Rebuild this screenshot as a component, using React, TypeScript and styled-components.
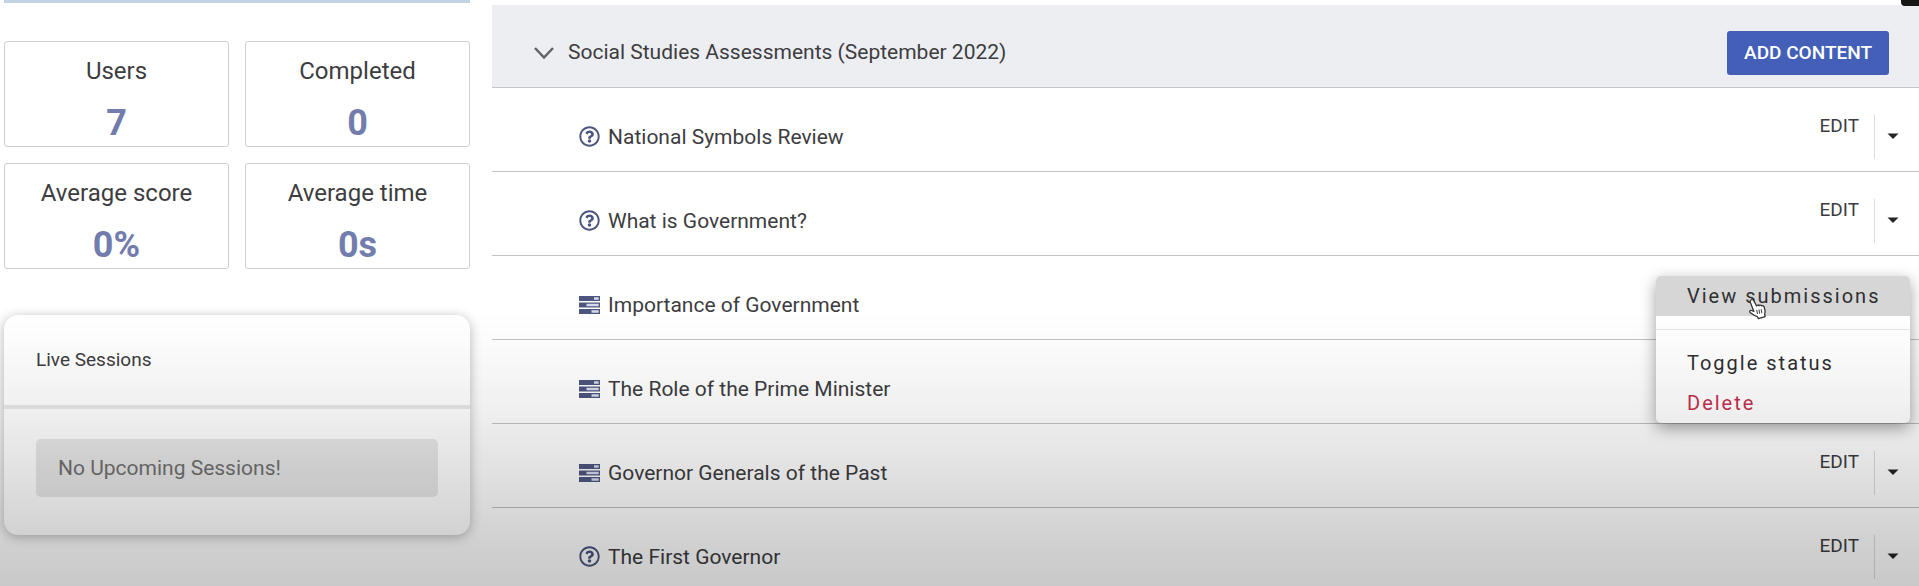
import React from "react";
import styled, { createGlobalStyle, css } from "styled-components";
import { FaRegQuestionCircle } from "react-icons/fa";

const GlobalStyle = createGlobalStyle`
  *, *::before, *::after { box-sizing: border-box; }
  body {
    margin: 0;
    background: #fff;
    color: #3d3d3f;
    font-family: Roboto, "Liberation Sans", sans-serif;
  }
  html { overflow: hidden; }
  button { font: inherit; color: inherit; background: none; border: 0; padding: 0; cursor: pointer; }
  h1, h2, p, ul, dl, dd { margin: 0; padding: 0; }
  ul { list-style: none; }
`;

const Page = styled.div`
  position: relative;
  display: flex;
  gap: 22px;
  padding-left: 4px;
`;

const Sidebar = styled.aside`
  flex: none;
  width: 466px;
`;

const Banner = styled.div`
  height: 3px;
  margin-bottom: 38px;
  background: #c2d4e3;
`;

const Stats = styled.dl`
  display: grid;
  grid-template-columns: 1fr 1fr;
  gap: 16px;
`;

const Stat = styled.div`
  height: 106px;
  padding-top: 13px;
  border: 1px solid #cfcfd1;
  border-radius: 3px;
  text-align: center;
`;

const StatLabel = styled.dt`
  font-size: 24px;
  line-height: 32px;
`;

const StatValue = styled.dd`
  margin-top: 14px;
  font-size: 36px;
  font-weight: 700;
  line-height: 44px;
  color: #727dad;
`;

const Card = styled.section`
  margin-top: 46px;
  border-radius: 14px;
  background: #fff;
  box-shadow: 0 2px 12px rgba(0, 0, 0, 0.28);
`;

const CardHeader = styled.header`
  padding: 30px 32px;
  border-bottom: 4px solid #e8e8e8;
`;

const CardTitle = styled.h2`
  font-size: 19px;
  font-weight: 400;
  line-height: 30px;
`;

const CardBody = styled.div`
  padding: 30px 32px 38px;
`;

const Notice = styled.p`
  padding: 14px 22px;
  border-radius: 5px;
  background: #e8e8e8;
  color: #717171;
  font-size: 21px;
  line-height: 30px;
`;

const Content = styled.main`
  flex: 1;
  min-width: 0;
  padding-top: 5px;
`;

const SectionHeader = styled.header`
  display: flex;
  align-items: center;
  height: 83px;
  padding: 14px 30px 0 42px;
  border-bottom: 1px solid #c4c5c8;
  background: #edeef2;
`;

const Toggle = styled.button`
  display: flex;
  margin-right: 14px;
`;

const SectionTitle = styled.h1`
  flex: 1;
  padding-bottom: 2px;
  font-size: 21px;
  font-weight: 400;
  line-height: 30px;
`;

const AddButton = styled.button`
  height: 44px;
  padding: 0 17px;
  && { background: #435fb8; color: #fff; font-size: 19px; font-weight: 500; line-height: 44px; }
  border-radius: 3px;
`;

const Row = styled.li`
  position: relative;
  display: flex;
  align-items: center;
  height: 84px;
  padding: 14px 16px 0 87px;
  border-bottom: 1px solid #c3c3c3;
  font-size: 21px;
  line-height: 30px;
`;

const RowIcon = styled.span`
  display: flex;
  width: 21px;
  margin-right: 8px;
  color: #4d567f;
`;

const RowTitle = styled.span`
  flex: 1;
`;

const Actions = styled.div`
  display: flex;
  height: 44px;
`;

const EditButton = styled.button`
  height: 22px;
  margin-right: 15px;
  && { font-size: 19px; line-height: 22px; }
`;

const CaretButton = styled.button`
  display: flex;
  align-items: center;
  && { padding: 0 4px 0 12px; border-left: 1px solid #dcdcdc; }
`;

const Menu = styled.div`
  position: absolute;
  z-index: 1;
  top: 20px;
  right: 9px;
  width: 254px;
  height: 147px;
  border-radius: 5px;
  background: #fff;
  box-shadow: 0 5px 16px rgba(0, 0, 0, 0.38);
`;

const MenuItem = styled.button<{ $active?: boolean; $danger?: boolean }>`
  display: block;
  width: 100%;
  height: 40px;
  && {
    padding-left: 31px;
    font-size: 20px;
    letter-spacing: 2px;
    line-height: 40px;
    text-align: left;
    color: ${(p) => (p.$danger ? "#c5304f" : "#2f2f31")};
    ${(p) => p.$active && css`background: #d6d6d6; border-radius: 5px 5px 0 0;`}
  }
`;

const MenuRule = styled.hr`
  margin: 13px 0;
  border: 0;
  border-top: 1px solid #e6e6e6;
`;

const Pointer = styled.svg`
  position: absolute;
  z-index: 2;
  top: 22px;
  left: 92px;
`;

const Shade = styled.div`
  position: fixed;
  z-index: 3;
  inset: auto 0 0;
  height: 47vh;
  pointer-events: none;
  background: linear-gradient(
    rgba(0, 0, 0, 0), rgba(0, 0, 0, 0.015) 12%, rgba(0, 0, 0, 0.06) 35%,
    rgba(0, 0, 0, 0.12) 60%, rgba(0, 0, 0, 0.18) 83%, rgba(0, 0, 0, 0.21)
  );
`;

const Corner = styled.div`
  position: absolute;
  z-index: 4;
  top: 0;
  right: 0;
  width: 18px;
  height: 6px;
  border-bottom-left-radius: 4px;
  background: #161616;
`;

const TasksIcon = () => (
  <svg width="21" height="18" viewBox="0 0 21 18" aria-hidden="true">
    <path fill="currentColor" d="M0 0h21v5H0zM0 6.500h21v5H0zM0 13h21v5H0z" />
    <path fill="#d5daec" d="M15 1.300h4.700v2.400H15zM7.500 7.800h12.200v2.400H7.500zM12.500 14.300h7.200v2.400h-7.200z" />
  </svg>
);

const Caret = () => (
  <svg width="12" height="7" viewBox="0 0 12 7" aria-hidden="true">
    <path d="M.5.500h11L6 6z" fill="#252525" />
  </svg>
);

const HandPointer = () => (
  <Pointer width="20" height="22" viewBox="0 0 20 22" aria-hidden="true">
    <path
      d="M3 2c1-.8 2.200-.2 2.900.9L8.600 8c.4-1.200 2.100-1.300 2.600-.3.600-1 2-.8 2.400.2.900-.5 2.100-.1 2.500.9 1 2.700 1.400 5 .6 7.600l.4 2.300-6.700 1.900-1-1.900c-2.500-.7-5-2.300-7.300-4.100-1.100-1 .1-2.700 1.500-2.100l2.300.9L2.300 4.200C1.900 3.400 2.200 2.500 3 2z"
      fill="#fff" stroke="#333" strokeWidth="1.300" strokeLinejoin="round"
    />
    <path d="M8.700 12l.8 4M11 11.500l.6 4.200M13.300 11.200l.5 4" stroke="#444" strokeWidth="1.100" />
  </Pointer>
);

const stats = [
  { label: "Users", value: "7" },
  { label: "Completed", value: "0" },
  { label: "Average score", value: "0%" },
  { label: "Average time", value: "0s" },
];

type Item = { title: string; kind: "quiz" | "task"; side: "actions" | "menu" | "none" };

const items: Item[] = [
  { title: "National Symbols Review", kind: "quiz", side: "actions" },
  { title: "What is Government?", kind: "quiz", side: "actions" },
  { title: "Importance of Government", kind: "task", side: "menu" },
  { title: "The Role of the Prime Minister", kind: "task", side: "none" },
  { title: "Governor Generals of the Past", kind: "task", side: "actions" },
  { title: "The First Governor", kind: "quiz", side: "actions" },
];

const ItemMenu = () => (
  <Menu>
    <MenuItem $active>View submissions</MenuItem>
    <MenuRule />
    <MenuItem>Toggle status</MenuItem>
    <MenuItem $danger>Delete</MenuItem>
    <HandPointer />
  </Menu>
);

const ContentRow = ({ item }: { item: Item }) => (
  <Row>
    <RowIcon>{item.kind === "quiz" ? <FaRegQuestionCircle size={21} /> : <TasksIcon />}</RowIcon>
    <RowTitle>{item.title}</RowTitle>
    {item.side === "actions" && (
      <Actions>
        <EditButton>EDIT</EditButton>
        <CaretButton aria-label={`More actions for ${item.title}`}><Caret /></CaretButton>
      </Actions>
    )}
    {item.side === "menu" && <ItemMenu />}
  </Row>
);

export default function App() {
  return (
    <>
      <GlobalStyle />
      <Page>
        <Sidebar>
          <Banner />
          <Stats>
            {stats.map((s) => (
              <Stat key={s.label}>
                <StatLabel>{s.label}</StatLabel>
                <StatValue>{s.value}</StatValue>
              </Stat>
            ))}
          </Stats>
          <Card>
            <CardHeader><CardTitle>Live Sessions</CardTitle></CardHeader>
            <CardBody><Notice>No Upcoming Sessions!</Notice></CardBody>
          </Card>
        </Sidebar>
        <Content>
          <SectionHeader>
            <Toggle aria-label="Collapse section">
              <svg width="20" height="14" viewBox="0 0 20 14" fill="none" stroke="#626367" strokeWidth="2.500">
                <path d="M1 2l9 9.500L19 2" />
              </svg>
            </Toggle>
            <SectionTitle>Social Studies Assessments (September 2022)</SectionTitle>
            <AddButton>ADD CONTENT</AddButton>
          </SectionHeader>
          <ul>
            {items.map((item) => <ContentRow key={item.title} item={item} />)}
          </ul>
        </Content>
        <Corner />
      </Page>
      <Shade />
    </>
  );
}
